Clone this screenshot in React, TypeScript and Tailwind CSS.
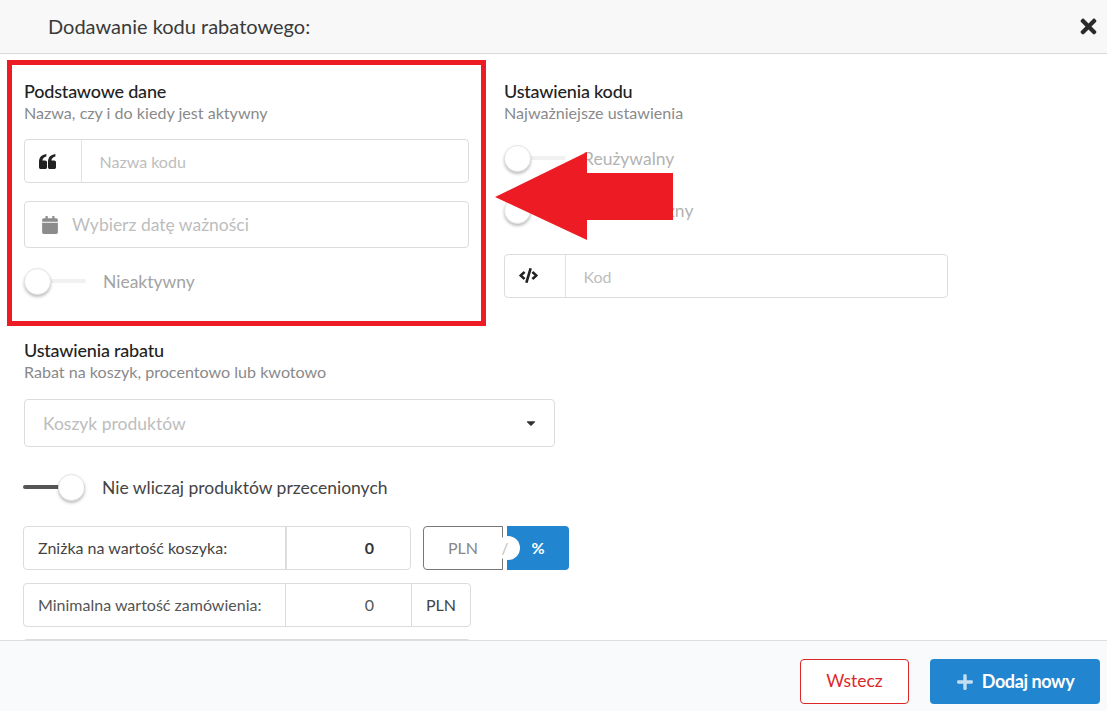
import { FaCalendar, FaCode, FaPlus, FaTimes, FaCaretDown } from "react-icons/fa";

function Heading({ title, sub }: { title: string; sub: string }) {
  return (
    <div>
      <div className="text-[18px] leading-[20px] font-medium text-[#222] tracking-[-0.2px]">{title}</div>
      <div className="text-[16.1px] leading-[20px] mt-[2px] text-[#8a8a8a]">{sub}</div>
    </div>
  );
}

function QuoteIcon() {
  return (
    <svg width="17" height="15" viewBox="0 0 17 15" fill="#222">
      <path d="M0 8C0 3.5 2.2.8 7.4 0v2.4C5 3 3.6 4.4 3.4 6.4H6.2C7.2 6.4 8 7.2 8 8.2V13.2C8 14.2 7.2 15 6.2 15H1.8C.8 15 0 14.2 0 13.2Z" />
      <path d="M9 8C9 3.5 11.2.8 16.4 0v2.4C14 3 12.6 4.4 12.4 6.4H15.2C16.2 6.4 17 7.2 17 8.2V13.2C17 14.2 16.2 15 15.2 15H10.8C9.8 15 9 14.2 9 13.2Z" />
    </svg>
  );
}

function Toggle({ label, on, labelClass }: { label: string; on?: boolean; labelClass: string }) {
  return (
    <div className="flex items-center gap-[17px]">
      <div className="relative w-[62px] h-[27px] shrink-0">
        <div className={`absolute left-0 right-0 top-[11px] h-[4px] rounded-full ${on ? "bg-[#555]" : "bg-[#f1f1f1]"}`} />
        <div
          className={`absolute top-0 w-[27px] h-[27px] rounded-full bg-white border border-[#e4e4e4] shadow-[0_2px_3px_rgba(0,0,0,0.25)] ${on ? "right-0" : "left-0"}`}
        />
      </div>
      <span className={`pt-[1px] ${labelClass}`}>{label}</span>
    </div>
  );
}

function IconInput({ icon, placeholder, iconWidth }: { icon: React.ReactNode; placeholder: string; iconWidth: string }) {
  return (
    <div className="flex h-[44px] rounded-[4px] border border-[#dcdcdc] bg-white">
      <div className={`${iconWidth} flex items-center pl-[14px] border-r border-[#e2e2e2] text-[#222]`}>{icon}</div>
      <div className="flex items-center pl-[17.5px] pt-[2px] text-[16px] text-[#bdbdbd]">{placeholder}</div>
    </div>
  );
}

export default function App() {
  return (
    <div
      className="relative w-[1107px] h-[711px] overflow-hidden bg-white flex flex-col text-[#333]"
      style={{ fontFamily: '"Lato", "Liberation Sans", sans-serif' }}
    >
      <header className="h-[54px] shrink-0 bg-[#f8f8f8] border-b border-[#d8d8d8] flex items-center justify-between pl-[48px] pr-[7px]">
        <span className="text-[20px] text-[#3a3a3a] pb-[2px]">Dodawanie kodu rabatowego:</span>
        <FaTimes className="text-[#2b2b2b] text-[23px]" />
      </header>

      <main className="flex-1 overflow-hidden pl-[23px] pt-[27px]">
        <div className="flex">
          <section className="w-[446px] pl-[1px]">
            <Heading title="Podstawowe dane" sub="Nazwa, czy i do kiedy jest aktywny" />
            <div className="mt-[16px]">
              <IconInput icon={<QuoteIcon />} placeholder="Nazwa kodu" iconWidth="w-[57px]" />
            </div>
            <div className="mt-[18px] h-[47px] rounded-[4px] border border-[#dcdcdc] flex items-center pl-[16px] gap-[13px]">
              <FaCalendar className="text-[#8c8c8c] text-[18px]" />
              <span className="pt-[2px] text-[17.5px] text-[#bdbdbd]">Wybierz datę ważności</span>
            </div>
            <div className="mt-[20px]">
              <Toggle label="Nieaktywny" labelClass="text-[17.5px] text-[#a3a3a3]" />
            </div>
          </section>

          <section className="w-[444px] ml-[35px]">
            <Heading title="Ustawienia kodu" sub="Najważniejsze ustawienia" />
            <div className="mt-[22px]">
              <Toggle label="Reużywalny" labelClass="text-[17.5px] text-[#b3b3b3]" />
            </div>
            <div className="mt-[25px]">
              <Toggle label="Automatyczny" labelClass="text-[17.5px] text-[#b3b3b3]" />
            </div>
            <div className="mt-[29px]">
              <IconInput icon={<FaCode className="text-[#222] text-[19px]" />} placeholder="Kod" iconWidth="w-[61px]" />
            </div>
          </section>
        </div>

        <section className="mt-[42px] pl-[1px]">
          <Heading title="Ustawienia rabatu" sub="Rabat na koszyk, procentowo lub kwotowo" />
          <div className="mt-[17px] w-[531px] h-[48px] rounded-[4px] border border-[#dcdcdc] flex items-center justify-between pl-[18px] pr-[16px]">
            <span className="pt-[4px] text-[17.5px] text-[#bdbdbd]">Koszyk produktów</span>
            <FaCaretDown className="text-[#333] text-[14px]" />
          </div>
        </section>

        <div className="mt-[27px]">
          <Toggle on label="Nie wliczaj produktów przecenionych" labelClass="text-[17.5px] text-[#444]" />
        </div>

        <div className="mt-[25px] flex items-stretch h-[44px]">
          <div className="w-[388px] flex rounded-[4px] border border-[#dcdcdc] text-[16px]">
            <div className="w-[263px] flex items-center pl-[14px] border-r-2 border-[#dcdcdc] text-[#444]">Zniżka na wartość koszyka:</div>
            <div className="flex-1 flex items-center justify-center pl-[42px] font-bold text-[#333]">0</div>
          </div>
          <div className="relative ml-[12px] w-[146px] flex">
            <div className="w-[80px] rounded-l-[4px] border border-[#777] flex items-center justify-center text-[16px] text-[#888]">PLN</div>
            <div className="ml-[4px] w-[62px] rounded-r-[4px] bg-[#2185d0] flex items-center justify-center text-[16px] font-bold text-white">%</div>
            <div className="absolute left-[73px] top-[10px] w-[24px] h-[24px] rounded-full bg-white flex items-center justify-center text-[15px] text-[#bbb] pr-[6px]">/</div>
          </div>
        </div>

        <div className="mt-[13px] w-[448px] h-[44px] flex rounded-[4px] border border-[#dcdcdc] text-[16px] text-[#555]">
          <div className="w-[262px] flex items-center pl-[14px] border-r border-[#dcdcdc]">Minimalna wartość zamówienia:</div>
          <div className="w-[126px] flex items-center justify-center pl-[42px] border-r border-[#dcdcdc]">0</div>
          <div className="flex-1 flex items-center justify-center text-[#444]">PLN</div>
        </div>

        <div className="mt-[12px] w-[448px] h-[44px] rounded-[4px] border border-[#dcdcdc]" />
      </main>

      <footer className="h-[71px] shrink-0 bg-[#f9fafb] border-t border-[#dcdde0] flex items-start justify-end gap-[21px] pt-[18px] pr-[7px]">
        <button className="w-[109px] h-[45px] rounded-[4px] border border-[#db2828] bg-white text-[#db2828] text-[17.5px]">Wstecz</button>
        <button className="w-[170px] h-[45px] rounded-[4px] bg-[#2185d0] text-white text-[18px] font-bold flex items-center justify-center gap-[8px] tracking-[-0.4px]">
          <FaPlus className="text-[#c5dff2] text-[18px]" />
          Dodaj nowy
        </button>
      </footer>

      {/* Red annotation frame and arrow drawn on top of the screenshot */}
      <div className="absolute left-[7px] top-[60px] w-[479px] h-[266px] border-[5px] border-[#ed1c24] pointer-events-none" />
      <svg className="absolute left-0 top-0 pointer-events-none" width="1107" height="711">
        <polygon points="495,197 587,152 587,173 673,173 673,220 587,220 587,240" fill="#ed1c24" />
      </svg>
    </div>
  );
}
